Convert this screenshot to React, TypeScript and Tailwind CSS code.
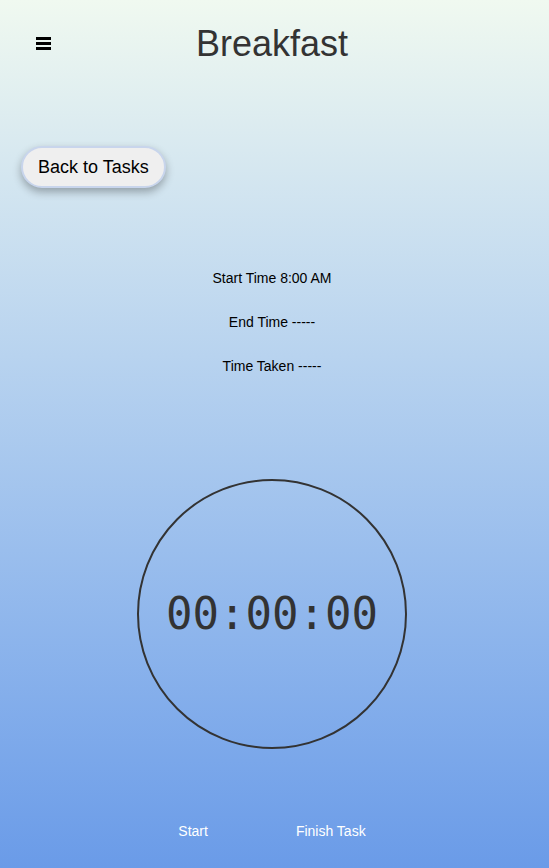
import React from "react";

export default function App() {
  return (
    <div className="min-h-[868px] w-full bg-gradient-to-b from-[#f0f9f0] to-[#6a9be8] font-['Liberation_Sans',Arial,sans-serif] text-[#333]">
      <div className="flex flex-col pr-[5px]">
        {/* header */}
        <header className="relative flex h-[88px] items-center justify-center">
          <button className="absolute left-[36px] top-[37px] flex flex-col gap-[2px]" aria-label="menu">
            <span className="block h-[3px] w-[15px] bg-black" />
            <span className="block h-[3px] w-[15px] bg-black" />
            <span className="block h-[3px] w-[15px] bg-black" />
          </button>
          <h1 className="text-[36px] leading-none">Breakfast</h1>
        </header>

        <div className="mt-[58px] pl-[21px]">
          <button className="h-[42px] rounded-full border-2 border-[#c8d5ec] bg-[#efefef] px-[15px] text-[18px] text-black shadow-[0_4px_8px_rgba(0,0,0,0.3)]">
            Back to Tasks
          </button>
        </div>

        <div className="mt-[82px] flex flex-col items-center gap-[28px] text-[14px] leading-[16px] text-black">
          <p>Start Time 8:00 AM</p>
          <p>End Time -----</p>
          <p>Time Taken -----</p>
        </div>

        <div className="mt-[105px] flex justify-center">
          <div className="flex h-[270px] w-[270px] items-center justify-center rounded-full border-2 border-[#333]">
            <span className="font-['DejaVu_Sans_Mono',monospace] text-[44px] leading-none text-[#333]">00:00:00</span>
          </div>
        </div>

        <div className="mt-[68px] flex justify-center gap-[28px] text-[14px] text-white">
          <button className="px-[30px] py-[4px]">Start</button>
          <button className="px-[30px] py-[4px]">Finish Task</button>
        </div>
      </div>
    </div>
  );
}
